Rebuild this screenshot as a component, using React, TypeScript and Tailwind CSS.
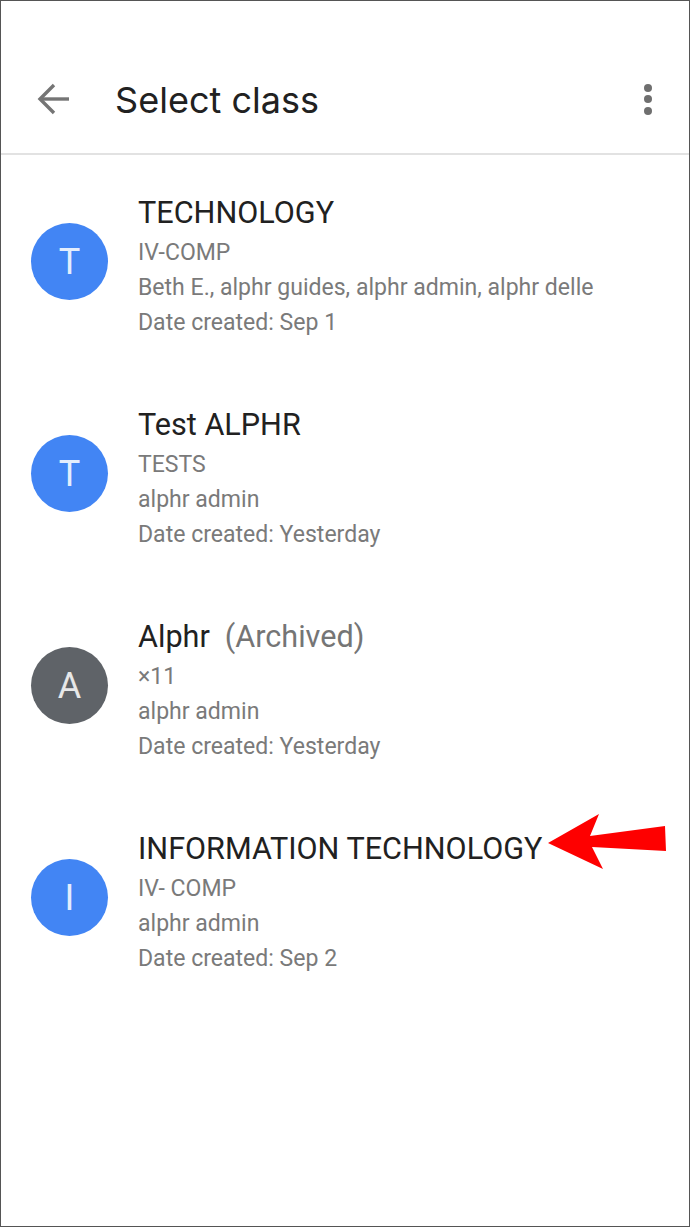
import React from "react";

interface ClassRow {
  initial: string;
  title: string;
  archived?: boolean;
  section: string;
  people: string;
  created: string;
  color: string;
}

const rows: ClassRow[] = [
  {
    initial: "T",
    title: "TECHNOLOGY",
    section: "IV-COMP",
    people: "Beth E., alphr guides, alphr admin, alphr delle",
    created: "Date created: Sep 1",
    color: "bg-[#4285f4]",
  },
  {
    initial: "T",
    title: "Test ALPHR",
    section: "TESTS",
    people: "alphr admin",
    created: "Date created: Yesterday",
    color: "bg-[#4285f4]",
  },
  {
    initial: "A",
    title: "Alphr",
    archived: true,
    section: "×11",
    people: "alphr admin",
    created: "Date created: Yesterday",
    color: "bg-[#5f6368]",
  },
  {
    initial: "I",
    title: "INFORMATION TECHNOLOGY",
    section: "IV- COMP",
    people: "alphr admin",
    created: "Date created: Sep 2",
    color: "bg-[#4285f4]",
  },
];

const App: React.FC = () => {
  return (
    <div className="relative h-[1227px] w-[690px] overflow-hidden border border-[#555555] bg-white font-['Roboto',sans-serif]">
      <header className="flex h-[154px] items-center border-b-2 border-[#e2e2e2] pt-[43px]">
        <svg className="ml-[36px] h-[34px] w-[34px]" viewBox="0 0 34 34" fill="none" stroke="#757575" strokeWidth="3.4">
          <path d="M32 17H4" />
          <path d="M17 3L3 17l14 14" />
        </svg>
        <h1 className="ml-[44px] mt-[2px] font-['Inter',sans-serif] text-[36px] leading-[44px] tracking-[0.03px] text-[#212121]">
          Select class
        </h1>
        <div className="ml-auto mr-[37px] mt-[1px] flex flex-col gap-[3.5px]">
          <span className="h-2 w-2 rounded-full bg-[#6f6f6f]" />
          <span className="h-2 w-2 rounded-full bg-[#6f6f6f]" />
          <span className="h-2 w-2 rounded-full bg-[#6f6f6f]" />
        </div>
      </header>

      <ul className="flex flex-col gap-[65px] pl-[30px] pt-[38px]">
        {rows.map((row) => (
          <li key={row.title} className="flex items-start">
            <div
              className={`mt-[30px] flex h-[77px] w-[77px] shrink-0 items-center justify-center rounded-full text-[36px] text-white/85 ${row.color}`}
            >
              {row.initial}
            </div>
            <div className="ml-[30px]">
              <div className="mb-[2px] whitespace-nowrap text-[30.6px] leading-[40px] text-[#212121]">
                {row.title}
                {row.archived && <span className="ml-[15px] text-[#757575]">(Archived)</span>}
              </div>
              <div className="text-[23.05px] leading-[35px] text-[#7a7a7a]">
                <div>{row.section}</div>
                <div className="whitespace-nowrap">{row.people}</div>
                <div>{row.created}</div>
              </div>
            </div>
          </li>
        ))}
      </ul>

      {/* red annotation arrow */}
      <svg className="absolute left-[546px] top-[811px] h-[58px] w-[119px]" viewBox="548 812 119 58">
        <polygon points="549,843 600,814 591,836 666,826 667,851 593,847 604,869" fill="#fe0000" />
      </svg>
    </div>
  );
};

export default App;
